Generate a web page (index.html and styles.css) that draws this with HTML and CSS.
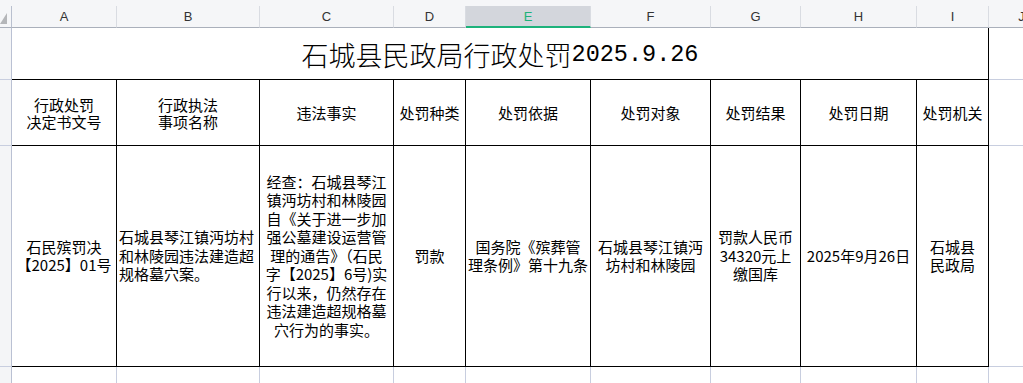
FILE: index.html
```html
<!DOCTYPE html>
<html lang="zh-CN">
<head>
<meta charset="utf-8">
<title>石城县民政局行政处罚</title>
<link rel="stylesheet" href="styles.css">
</head>
<body>
<div class="sheet">
  <div class="strip"></div>

  <div class="corner"><span class="tri"></span></div>
  <div class="ch">A</div>
  <div class="ch">B</div>
  <div class="ch">C</div>
  <div class="ch">D</div>
  <div class="ch sel">E</div>
  <div class="ch">F</div>
  <div class="ch">G</div>
  <div class="ch">H</div>
  <div class="ch">I</div>
  <div class="ch">J</div>

  <div class="rh"></div>
  <div class="c title">石城县民政局行政处罚<span class="num">2025.9.26</span></div>
  <div class="gj"></div>

  <div class="rh"></div>
  <div class="c hd">行政处罚<br>决定书文号</div>
  <div class="c hd">行政执法<br>事项名称</div>
  <div class="c hd">违法事实</div>
  <div class="c hd">处罚种类</div>
  <div class="c hd">处罚依据</div>
  <div class="c hd">处罚对象</div>
  <div class="c hd">处罚结果</div>
  <div class="c hd">处罚日期</div>
  <div class="c hd">处罚机关</div>
  <div class="gj"></div>

  <div class="rh"></div>
  <div class="c">石民殡罚决<br>【2025】01号</div>
  <div class="c left">石城县琴江镇沔坊村<br>和林陵园违法建造超<br>规格墓穴案。</div>
  <div class="c">经查：石城县琴江<br>镇沔坊村和林陵园<br>自《关于进一步加<br>强公墓建设运营管<br>理的通告》（石民<br>字【2025】6号)实<br>行以来，仍然存在<br>违法建造超规格墓<br>穴行为的事实。</div>
  <div class="c">罚款</div>
  <div class="c">国务院《殡葬管<br>理条例》第十九条</div>
  <div class="c">石城县琴江镇沔<br>坊村和林陵园</div>
  <div class="c">罚款人民币<br>34320元上<br>缴国库</div>
  <div class="c">2025年9月26日</div>
  <div class="c">石城县<br>民政局</div>
  <div class="gj"></div>

  <div class="rh"></div>
  <div class="g"></div>
  <div class="g"></div>
  <div class="g"></div>
  <div class="g"></div>
  <div class="g"></div>
  <div class="g"></div>
  <div class="g"></div>
  <div class="g"></div>
  <div class="g"></div>
  <div class="g"></div>
</div>
</body>
</html>
```

FILE: styles.css
```css
html, body {
  margin: 0;
  padding: 0;
  background: #ffffff;
  overflow: hidden;
}

body {
  font-family: "Noto Sans CJK SC", "Noto Sans", sans-serif;
  color: #000;
}

.sheet {
  display: grid;
  grid-template-columns: 12px 105px 143px 134px 72px 125px 120px 90px 116px 72px 66px;
  grid-template-rows: 6px 22px 52px 66px 221px 40px;
  width: 1023px;
  height: 383px;
  overflow: hidden;
}

.sheet > div {
  box-sizing: border-box;
}

.strip {
  grid-column: 1 / -1;
  background: #f5f6f8;
}

.corner {
  background: #f5f6f8;
  border-right: 1px solid #b9c0cf;
  border-bottom: 1px solid #aab0bb;
  display: flex;
  align-items: flex-end;
  justify-content: flex-start;
  padding-bottom: 3px;
}

.tri {
  width: 7px;
  height: 11px;
  background: #b4b6b9;
  clip-path: polygon(100% 0, 100% 100%, 0 100%);
}

.ch {
  background: #f5f6f8;
  border-right: 1px solid #d9dce2;
  border-bottom: 1px solid #aab0bb;
  display: flex;
  align-items: center;
  justify-content: center;
  font-family: "Liberation Sans", "Noto Sans", sans-serif;
  font-size: 13px;
  color: #333;
}

.ch.sel {
  background: #d3d6dc;
  border-bottom: 2px solid #1db27b;
  color: #1db27b;
}

.rh {
  background: #f4f5f7;
  border-right: 1px solid #bac1d3;
  border-bottom: 1px solid #c8cedf;
}

.c {
  border-right: 1px solid #000;
  border-bottom: 1px solid #000;
  display: flex;
  align-items: center;
  justify-content: center;
  text-align: center;
  font-size: 15px;
  line-height: 18.5px;
  overflow: hidden;
}

.c.hd {
  line-height: 17px;
}

.c.left {
  justify-content: flex-start;
  text-align: left;
  padding-left: 2px;
}

.c.title {
  grid-column: span 9;
  font-size: 27px;
  font-weight: 300;
  line-height: 32px;
  padding-top: 2px;
}

.num {
  font-family: "Liberation Mono", monospace;
  font-size: 23.5px;
}

.gj {
  border-bottom: 1px solid #c8cedf;
}

.g {
  border-right: 1px solid #c8cedf;
}
```
